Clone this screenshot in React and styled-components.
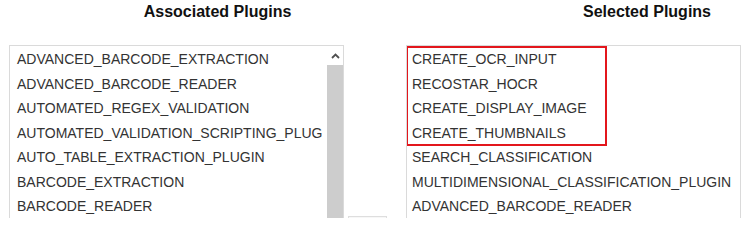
import React from 'react';
import styled, { createGlobalStyle } from 'styled-components';

const GlobalStyle = createGlobalStyle`
  body {
    margin: 0;
    background: #fff;
    font-family: "Liberation Sans", Arial, sans-serif;
  }
`;

const Page = styled.div`
  width: 749px;
  height: 218px;
  box-sizing: border-box;
  padding-left: 9px;
  overflow: hidden;
  color: #333;
`;

const HeaderRow = styled.div`
  display: grid;
  grid-template-columns: 417px 1fr;
  padding-top: 2px;
`;

const Header = styled.h3`
  margin: 0;
  padding-left: ${p => p.$shift || 0}px;
  font-size: 16px;
  line-height: 20px;
  font-weight: 700;
  color: #111;
  text-align: center;
`;

const Lists = styled.div`
  display: flex;
  height: 173px;
  margin-top: 23px;
  overflow: hidden;
`;

const ListBox = styled.div`
  width: 335px;
  box-sizing: border-box;
  border: 1px solid #dadada;
  border-bottom: none;
  display: flex;
  overflow: hidden;
  background: #fff;
`;

const Items = styled.div`
  flex: 1;
  min-width: 0;
  margin-right: ${p => p.$gap || 0}px;
  padding-top: 1px;
  overflow: hidden;
`;

const Item = styled.div`
  font-size: 14px;
  line-height: 24.5px;
  height: 24.5px;
  padding-left: ${p => p.$pad || 6}px;
  white-space: nowrap;
  overflow: hidden;
  color: #333;
`;

const Highlight = styled.div`
  width: 199px;
  outline: 2px solid #e3161c;
  outline-offset: -1px;
`;

const Scrollbar = styled.div`
  width: 16px;
  display: flex;
  flex-direction: column;
  background: #f1f1f1;
`;

const ArrowButton = styled.div`
  height: 19px;
  display: flex;
  align-items: center;
  justify-content: center;
  background: #fff;
`;

const Thumb = styled.div`
  flex: 1;
  background: #cdcdcd;
`;

const Middle = styled.div`
  width: 62px;
  padding-left: 4px;
  box-sizing: border-box;
  overflow: hidden;
`;

const MoveButton = styled.div`
  margin-top: 171px;
  width: 39px;
  height: 26px;
  box-sizing: border-box;
  border: 1px solid #dedede;
  background: #f7f7f7;
`;

const available = [
  'ADVANCED_BARCODE_EXTRACTION',
  'ADVANCED_BARCODE_READER',
  'AUTOMATED_REGEX_VALIDATION',
  'AUTOMATED_VALIDATION_SCRIPTING_PLUGIN',
  'AUTO_TABLE_EXTRACTION_PLUGIN',
  'BARCODE_EXTRACTION',
  'BARCODE_READER',
];

const highlighted = ['CREATE_OCR_INPUT', 'RECOSTAR_HOCR', 'CREATE_DISPLAY_IMAGE', 'CREATE_THUMBNAILS'];

const selected = [
  'SEARCH_CLASSIFICATION',
  'MULTIDIMENSIONAL_CLASSIFICATION_PLUGIN',
  'ADVANCED_BARCODE_READER',
];

function ChevronUp() {
  return (
    <svg width="9" height="6" viewBox="0 0 9 6">
      <path d="M1 5 L4.5 1.5 L8 5" fill="none" stroke="#505050" strokeWidth="1.8" />
    </svg>
  );
}

export default function App() {
  return (
    <Page>
      <GlobalStyle />
      <HeaderRow>
        <Header>Associated Plugins</Header>
        <Header $shift={119}>Selected Plugins</Header>
      </HeaderRow>
      <Lists>
        <ListBox>
          <Items $gap={4}>
            {available.map(name => (
              <Item key={name} $pad={7}>{name}</Item>
            ))}
          </Items>
          <Scrollbar>
            <ArrowButton>
              <ChevronUp />
            </ArrowButton>
            <Thumb />
          </Scrollbar>
        </ListBox>
        <Middle>
          <MoveButton />
        </Middle>
        <ListBox>
          <Items>
            <Highlight>
              {highlighted.map(name => (
                <Item key={name} $pad={5}>{name}</Item>
              ))}
            </Highlight>
            {selected.map(name => (
              <Item key={name} $pad={5}>{name}</Item>
            ))}
          </Items>
        </ListBox>
      </Lists>
    </Page>
  );
}
